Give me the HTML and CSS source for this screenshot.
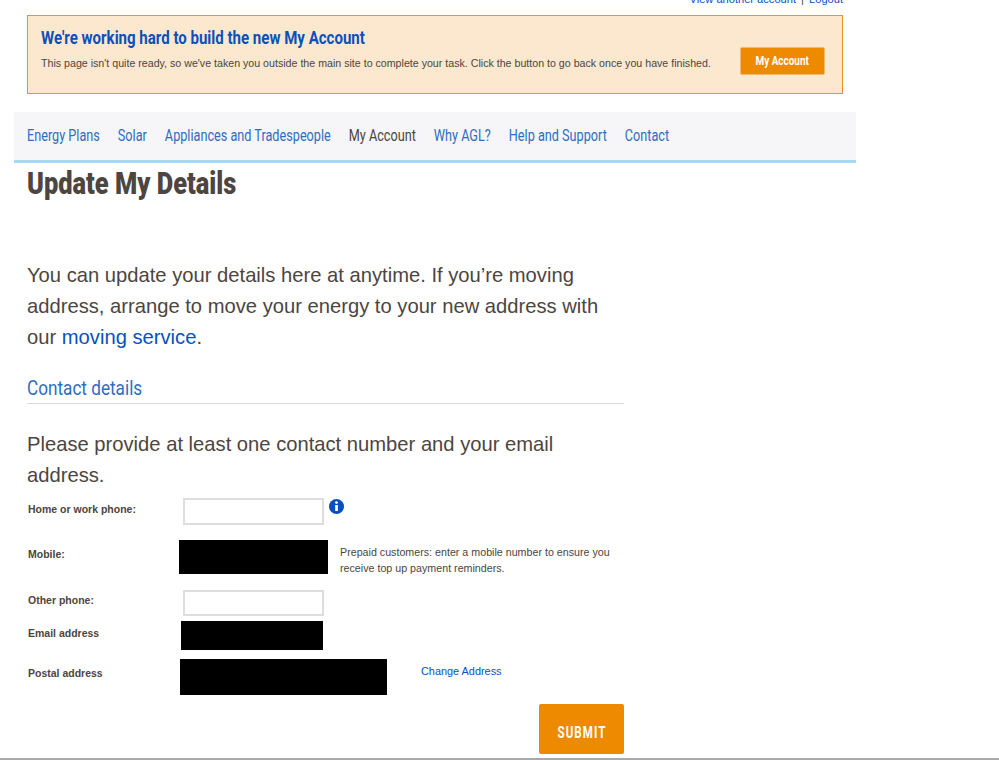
FILE: index.html
```html
<!DOCTYPE html>
<html lang="en">
<head>
    <meta charset="UTF-8">
    <meta name="viewport" content="width=device-width, initial-scale=1.0">
    <title>Update My Details</title>
    <link rel="stylesheet" href="styles.css">
</head>
<body>
    <div class="page">
        <div class="top-links">
            <a href="#">View another account</a> <span class="sep">|</span> <a href="#">Logout</a>
        </div>

        <div class="notice">
            <div class="notice-text">
                <h2>We're working hard to build the new My Account</h2>
                <p>This page isn't quite ready, so we've taken you outside the main site to complete your task. Click the button to go back once you have finished.</p>
            </div>
            <a href="#" class="notice-btn"><span>My Account</span></a>
        </div>

        <nav>
            <ul>
                <li><a href="#">Energy Plans</a></li>
                <li><a href="#">Solar</a></li>
                <li><a href="#">Appliances and Tradespeople</a></li>
                <li><a href="#" class="active">My Account</a></li>
                <li><a href="#">Why AGL?</a></li>
                <li><a href="#">Help and Support</a></li>
                <li><a href="#">Contact</a></li>
            </ul>
        </nav>

        <div class="content">
            <h1>Update My Details</h1>
            <p class="lead intro">You can update your details here at anytime. If you’re moving address, arrange to move your energy to your new address with our <a href="#">moving service</a>.</p>
            <h3><span>Contact details</span></h3>
            <p class="lead provide">Please provide at least one contact number and your email address.</p>

            <form class="details">
                <div class="row row-home">
                    <label>Home or work phone:</label>
                    <input type="text" class="field">
                    <svg class="info" width="15" height="15" viewBox="0 0 15 15">
                        <circle cx="7.5" cy="7.5" r="7.5" fill="#0650bd"/>
                        <circle cx="7.5" cy="3.6" r="1.4" fill="#fff"/>
                        <rect x="6.2" y="6" width="2.7" height="6" fill="#fff"/>
                    </svg>
                </div>
                <div class="row row-mobile">
                    <label>Mobile:</label>
                    <div class="redacted redacted-mobile"></div>
                    <p class="note">Prepaid customers: enter a mobile number to ensure you receive top up payment reminders.</p>
                </div>
                <div class="row row-other">
                    <label>Other phone:</label>
                    <input type="text" class="field">
                </div>
                <div class="row row-email">
                    <label>Email address</label>
                    <div class="redacted redacted-email"></div>
                </div>
                <div class="row row-postal">
                    <label>Postal address</label>
                    <div class="redacted redacted-postal"></div>
                    <a href="#" class="change">Change Address</a>
                </div>
                <div class="actions">
                    <button type="button" class="submit"><span>SUBMIT</span></button>
                </div>
            </form>
        </div>
    </div>
    <div class="page-end"></div>
</body>
</html>
```

FILE: styles.css
```css
* {
    margin: 0;
    padding: 0;
    box-sizing: border-box;
}

body {
    font-family: "Liberation Sans", Arial, sans-serif;
    color: #4d4540;
    background-color: #fff;
    overflow: hidden;
}

a {
    color: #0a50bd;
    text-decoration: none;
}

.page {
    width: 856px;
    height: 766px;
}

/* Top links */
.top-links {
    height: 15px;
    margin-top: -8px;
    margin-bottom: 8px;
    padding-right: 13px;
    text-align: right;
    font-size: 11.1px;
    line-height: 15px;
}

.sep {
    margin: 0 2px;
}

/* Notice */
.notice {
    height: 79px;
    margin-left: 27px;
    margin-right: 13px;
    padding: 11px 17px 0 13px;
    display: flex;
    justify-content: space-between;
    background-color: #fce8cf;
    border: 1px solid #f0931e;
}

.notice-text {
    min-width: 0;
}

/* no condensed font installed, so the display text is squeezed */
.notice h2 {
    font-family: Roboto, sans-serif;
    font-size: 18px;
    line-height: 22px;
    color: #0a50bd;
    margin-bottom: 7px;
    white-space: nowrap;
    transform: scaleX(0.835);
    transform-origin: left;
}

.notice p {
    font-size: 10.65px;
    line-height: 15px;
    white-space: nowrap;
}

.notice-btn {
    flex-shrink: 0;
    width: 85px;
    height: 28px;
    margin-top: 20px;
    background-color: #ee8a00;
    border: 1px solid #f5b769;
    border-radius: 2px;
    color: #fff;
    font-family: Roboto, sans-serif;
    font-size: 12px;
    font-weight: bold;
    line-height: 26px;
    text-align: center;
}

.notice-btn span {
    display: inline-block;
    transform: scaleX(0.83);
}

/* Nav */
nav {
    height: 51px;
    margin-top: 18px;
    margin-left: 14px;
    background-color: #f6f5f7;
    border-bottom: 3px solid #a6d8f7;
}

nav ul {
    display: flex;
    gap: 24.2px;
    list-style: none;
    margin-left: 13px;
    width: 1100px;
    white-space: nowrap;
    transform: scaleX(0.745);
    transform-origin: left;
}

nav a {
    font-family: Roboto, sans-serif;
    font-size: 17px;
    line-height: 46px;
    color: #2f6dc3;
}

nav a.active {
    color: #4d4540;
}

/* Content */
.content {
    width: 624px;
    padding-left: 27px;
}

h1 {
    font-family: Roboto, sans-serif;
    font-size: 31px;
    font-weight: 900;
    line-height: 40px;
    margin-top: 1px;
    white-space: nowrap;
    transform: scaleX(0.82);
    transform-origin: left;
}

.lead {
    font-size: 20.2px;
    line-height: 31px;
}

.intro {
    margin-top: 56px;
}

h3 {
    margin-top: 21px;
    padding-bottom: 1px;
    border-bottom: 1px solid #ddd;
    font-family: Roboto, sans-serif;
    font-size: 20px;
    font-weight: normal;
    line-height: 28px;
    color: #2f6dc3;
}

h3 span {
    display: inline-block;
    transform: scaleX(0.858);
    transform-origin: left;
}

.provide {
    margin-top: 25px;
}

/* Form */
.details {
    margin-top: 7px;
}

.row {
    display: flex;
    align-items: center;
    padding-left: 1px;
}

.row label {
    width: 151px;
    font-size: 10.5px;
    font-weight: bold;
}

.field {
    width: 141px;
    margin-left: 4px;
    background-color: #fff;
    border: 2px solid #ddd;
}

.redacted {
    background-color: #000;
}

.info {
    margin-left: 5px;
    align-self: flex-start;
    margin-top: 1px;
}

.row-home {
    height: 27px;
}

.row-home label {
    margin-top: -5px;
}

.row-home .field {
    height: 27px;
}

.row-mobile {
    height: 34px;
    margin-top: 15px;
}

.row-mobile label {
    margin-top: -6px;
}

.redacted-mobile {
    width: 149px;
    height: 34px;
}

.note {
    width: 280px;
    margin-left: 12px;
    margin-top: 5px;
    font-size: 10.7px;
    line-height: 16px;
}

.row-other {
    height: 26px;
    margin-top: 16px;
}

.row-other label {
    margin-top: -7px;
}

.row-other .field {
    height: 26px;
}

.row-email {
    height: 29px;
    margin-top: 5px;
}

.row-email label {
    margin-top: -5px;
}

.redacted-email {
    width: 142px;
    height: 29px;
    margin-left: 2px;
}

.row-postal {
    height: 36px;
    margin-top: 9px;
}

.row-postal label {
    margin-top: -8px;
}

.redacted-postal {
    width: 207px;
    height: 36px;
    margin-left: 1px;
}

.change {
    margin-left: 34px;
    margin-top: -12px;
    font-size: 10.9px;
}

.actions {
    display: flex;
    justify-content: flex-end;
    margin-top: 9px;
}

.submit {
    width: 85px;
    height: 50px;
    padding-top: 6px;
    background-color: #ee8a00;
    border: none;
    border-radius: 2px;
    color: #fff;
    font-family: Roboto, sans-serif;
    font-size: 16px;
    font-weight: bold;
    letter-spacing: 1.5px;
}

.submit span {
    display: inline-block;
    transform: scaleX(0.72);
}

.page-end {
    height: 2px;
    background-color: #aaa;
}
```
